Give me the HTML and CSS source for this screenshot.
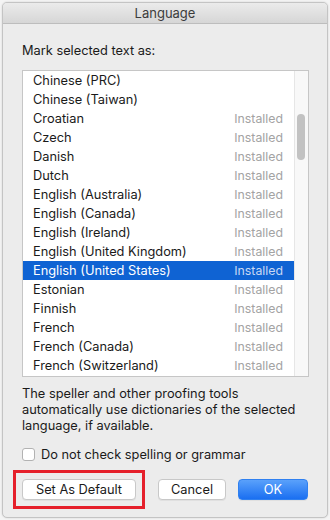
FILE: index.html
```html
<!DOCTYPE html>
<html lang="en">
<head>
  <meta charset="UTF-8">
  <title>Language</title>
  <link rel="stylesheet" href="styles.css">
</head>
<body>

<div class="window">
  <div class="titlebar">Language</div>

  <div class="content">
    <div class="caption">Mark selected text as:</div>

    <div class="listbox">
      <ul class="list">
        <li><span>Chinese (PRC)</span></li>
        <li><span>Chinese (Taiwan)</span></li>
        <li><span>Croatian</span><span class="state">Installed</span></li>
        <li><span>Czech</span><span class="state">Installed</span></li>
        <li><span>Danish</span><span class="state">Installed</span></li>
        <li><span>Dutch</span><span class="state">Installed</span></li>
        <li><span>English (Australia)</span><span class="state">Installed</span></li>
        <li><span>English (Canada)</span><span class="state">Installed</span></li>
        <li><span>English (Ireland)</span><span class="state">Installed</span></li>
        <li><span>English (United Kingdom)</span><span class="state">Installed</span></li>
        <li class="selected"><span>English (United States)</span><span class="state">Installed</span></li>
        <li><span>Estonian</span><span class="state">Installed</span></li>
        <li><span>Finnish</span><span class="state">Installed</span></li>
        <li><span>French</span><span class="state">Installed</span></li>
        <li><span>French (Canada)</span><span class="state">Installed</span></li>
        <li><span>French (Switzerland)</span><span class="state">Installed</span></li>
      </ul>
      <div class="scrollbar">
        <div class="thumb"></div>
      </div>
    </div>

    <p class="note">The speller and other proofing tools automatically use dictionaries of the selected language, if available.</p>

    <label class="check">
      <span class="box"></span>
      Do not check spelling or grammar
    </label>

    <div class="buttons">
      <span class="highlight">
        <button class="btn wide">Set As Default</button>
      </span>
      <button class="btn cancel">Cancel</button>
      <button class="btn primary">OK</button>
    </div>
  </div>
</div>

</body>
</html>
```

FILE: styles.css
```css
* {
  box-sizing: border-box;
}

body {
  margin: 0;
  padding: 2px;
  background-color: #f4f4f4;
  font-family: Inter, "Liberation Sans", sans-serif;
  font-size: 12.8px;
  color: #1a1a1a;
}

.window {
  width: 326px;
  height: 516px;
  background-color: #ececec;
  border: 1px solid #c4c4c4;
  border-radius: 5px;
  box-shadow: 0 0 2px rgba(0, 0, 0, 0.15);
  overflow: hidden;
}

.titlebar {
  height: 21px;
  line-height: 20px;
  text-align: center;
  font-size: 13px;
  color: #3c3c3c;
  background: linear-gradient(#ebebeb, #d6d6d6);
  border-bottom: 1px solid #bdbdbd;
}

.content {
  padding: 19px 19px 0 19px;
}

.caption {
  line-height: 16px;
  margin-bottom: 11px;
}

.listbox {
  display: flex;
  width: 287px;
  height: 307px;
  border: 1px solid #c6c6c6;
  background-color: #fff;
}

.list {
  flex: 1;
  margin: 0;
  padding: 0;
  list-style: none;
  overflow: hidden;
}

.list li {
  display: flex;
  justify-content: space-between;
  height: 19px;
  line-height: 20px;
  padding: 0 11px 0 10px;
}

.state {
  color: #a3a3a3;
  font-size: 12.3px;
}

.list li.selected {
  background-color: #0f63d3;
  color: #fff;
}

.list li.selected .state {
  color: #c9d8f3;
}

.scrollbar {
  width: 14px;
  background-color: #f8f8f8;
  border-left: 1px solid #e6e6e6;
  padding: 43px 0 0 2px;
}

.thumb {
  width: 8px;
  height: 46px;
  border-radius: 4px;
  background-color: #c2c2c2;
}

.note {
  margin: 9px 0 12px 0;
  line-height: 16px;
  padding-right: 4px;
}

.check {
  display: flex;
  align-items: center;
  gap: 6px;
  height: 16px;
}

.box {
  width: 13px;
  height: 13px;
  border: 1px solid #b2b2b2;
  border-radius: 3px;
  background-color: #fff;
}

.buttons {
  display: flex;
  margin-top: 17px;
}

.highlight {
  display: flex;
  outline: 3px solid #e5202b;
  outline-offset: 6px;
}

.btn {
  height: 21px;
  padding: 0;
  font-family: inherit;
  font-size: 12.8px;
  color: #1a1a1a;
  background-color: #fff;
  border: 1px solid #c8c8c8;
  border-radius: 4px;
  box-shadow: 0 1px 0 rgba(0, 0, 0, 0.05);
}

.wide {
  width: 114px;
}

.cancel {
  width: 69px;
  margin-left: 22px;
}

.primary {
  width: 71px;
  margin-left: 12px;
  color: #fff;
  border-color: #2f80f0;
  background: linear-gradient(#5aa1fb, #1a6ff1);
}
```
